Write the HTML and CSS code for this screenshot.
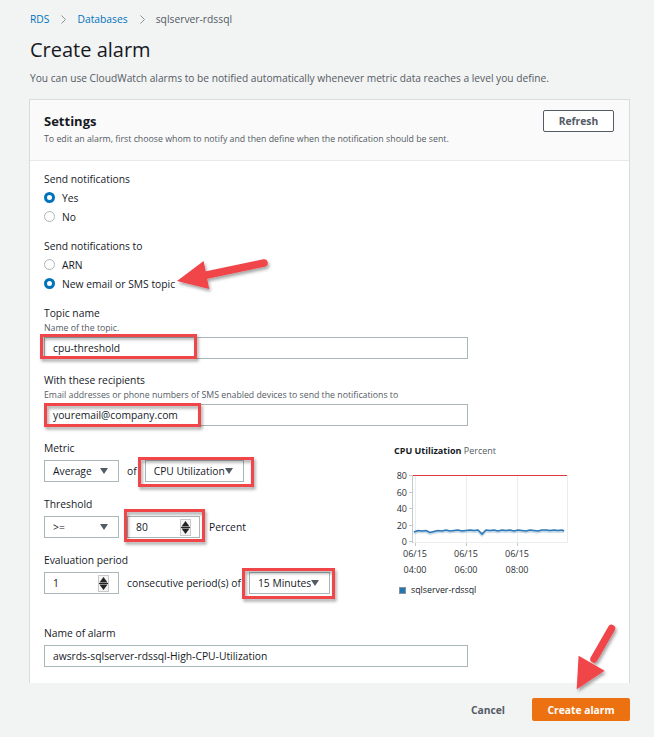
FILE: index.html
```html
<!DOCTYPE html>
<html lang="en">
<head>
<meta charset="utf-8">
<title>Create alarm</title>
<link rel="stylesheet" href="styles.css">
</head>
<body>
<div class="page">
  <nav class="crumbs">
    <a href="#">RDS</a>
    <svg class="sep" width="5" height="9" viewBox="0 0 5 9"><path d="M0.5 0.5 L4.5 4.5 L0.5 8.5" fill="none" stroke="#879596" stroke-width="1"/></svg>
    <a href="#">Databases</a>
    <svg class="sep" width="5" height="9" viewBox="0 0 5 9"><path d="M0.5 0.5 L4.5 4.5 L0.5 8.5" fill="none" stroke="#879596" stroke-width="1"/></svg>
    <span class="current">sqlserver-rdssql</span>
  </nav>
  <h1 class="title">Create alarm</h1>
  <p class="intro">You can use CloudWatch alarms to be notified automatically whenever metric data reaches a level you define.</p>

  <section class="panel">
    <header class="panel-head">
      <div>
        <h2 class="panel-title">Settings</h2>
        <p class="panel-sub">To edit an alarm, first choose whom to notify and then define when the notification should be sent.</p>
      </div>
      <button class="btn-outline" type="button">Refresh</button>
    </header>

    <div class="panel-body">
      <div class="field">
        <div class="label">Send notifications</div>
        <div class="radio checked"><span class="dot"></span>Yes</div>
        <div class="radio"><span class="dot"></span>No</div>
      </div>

      <div class="field">
        <div class="label">Send notifications to</div>
        <div class="radio"><span class="dot"></span>ARN</div>
        <div class="radio checked"><span class="dot"></span>New email or SMS topic</div>
      </div>

      <div class="field">
        <div class="label">Topic name</div>
        <div class="desc">Name of the topic.</div>
        <div class="input wide">cpu-threshold</div>
      </div>

      <div class="field field-text">
        <div class="label">With these recipients</div>
        <div class="desc">Email addresses or phone numbers of SMS enabled devices to send the notifications to</div>
        <div class="input wide">youremail@company.com</div>
      </div>

      <div class="metric-grid">
        <div class="metric-left">
          <div class="sub">
            <div class="label">Metric</div>
            <div class="row">
              <div class="select fixed"><span>Average</span><span class="caret"></span></div>
              <span>of</span>
              <div class="select auto"><span>CPU Utilization</span><span class="caret"></span></div>
            </div>
          </div>
          <div class="sub">
            <div class="label">Threshold</div>
            <div class="row">
              <div class="select fixed"><span>&gt;=</span><span class="caret"></span></div>
              <div class="number thr"><span>80</span>
                <svg class="spin" width="11" height="17" viewBox="0 0 11 17"><rect x="0.5" y="0.5" width="10" height="16" fill="#f4f4f4" stroke="#c9c9c9"/><path d="M1.5 7.5 L5.5 2 L9.5 7.5 Z" fill="#232323"/><line x1="1" y1="8.5" x2="10" y2="8.5" stroke="#232323" stroke-width="1"/><path d="M1.5 9.5 L9.5 9.5 L5.5 15 Z" fill="#232323"/></svg>
              </div>
              <span class="unit">Percent</span>
            </div>
          </div>
          <div class="sub">
            <div class="label">Evaluation period</div>
            <div class="row">
              <div class="number eval"><span>1</span>
                <svg class="spin" width="11" height="17" viewBox="0 0 11 17"><rect x="0.5" y="0.5" width="10" height="16" fill="#f4f4f4" stroke="#c9c9c9"/><path d="M1.5 7.5 L5.5 2 L9.5 7.5 Z" fill="#232323"/><line x1="1" y1="8.5" x2="10" y2="8.5" stroke="#232323" stroke-width="1"/><path d="M1.5 9.5 L9.5 9.5 L5.5 15 Z" fill="#232323"/></svg>
              </div>
              <span class="consec">consecutive period(s) of</span>
              <div class="select auto"><span>15 Minutes</span><span class="caret"></span></div>
            </div>
          </div>
        </div>

        <div class="chart">
          <div class="chart-title"><b>CPU Utilization</b> <span>Percent</span></div>
          <svg class="chart-svg" width="182" height="119" viewBox="0 0 182 119">
            <g stroke="#eaeded" stroke-width="1">
              <line x1="25.5" y1="18" x2="25.5" y2="85"/>
              <line x1="76.5" y1="18" x2="76.5" y2="85"/>
              <line x1="127.5" y1="18" x2="127.5" y2="85"/>
              <line x1="177.5" y1="18" x2="177.5" y2="85"/>
              <line x1="22" y1="85.5" x2="178" y2="85.5"/>
            </g>
            <g stroke="#c4c9cc" stroke-width="1">
              <line x1="22.5" y1="18" x2="22.5" y2="86"/>
              <line x1="19" y1="18.5" x2="22" y2="18.5"/>
              <line x1="19" y1="35.5" x2="22" y2="35.5"/>
              <line x1="19" y1="51.5" x2="22" y2="51.5"/>
              <line x1="19" y1="68.5" x2="22" y2="68.5"/>
              <line x1="19" y1="84.5" x2="22" y2="84.5"/>
              <line x1="25.5" y1="86" x2="25.5" y2="89"/>
              <line x1="76.5" y1="86" x2="76.5" y2="89"/>
              <line x1="127.5" y1="86" x2="127.5" y2="89"/>
            </g>
            <g class="ylab" text-anchor="end">
              <text x="17" y="21.5">80</text>
              <text x="17" y="38.5">60</text>
              <text x="17" y="54.5">40</text>
              <text x="17" y="71.5">20</text>
              <text x="17" y="87.5">0</text>
            </g>
            <line x1="23" y1="18.5" x2="177" y2="18.5" stroke="#e0393e" stroke-width="1.2"/>
            <polyline fill="none" stroke="#c8d9e6" stroke-width="3" points="24,76 28,74.5 32,75 36,74.5 40,76.5 44,75.5 48,74.5 52,75 56,74 60,75 64,74.5 68,74 72,75 76,74.5 80,74 84,74.5 88,74 92,78 96,74 100,74.5 104,74 108,75 112,74 116,74.5 120,74 124,75 128,74 132,74.5 136,75 140,74 144,74.5 148,75 152,74 156,74 160,74.5 164,74 168,74.5 172,74 174,75"/>
            <polyline fill="none" stroke="#2e78b7" stroke-width="1.6" points="24,75 28,73.5 32,74 36,73.5 40,75.5 44,74.5 48,73.5 52,74 56,73 60,74 64,73.5 68,73 72,74 76,73.5 80,73 84,73.5 88,73 92,77 96,73 100,73.5 104,73 108,74 112,73 116,73.5 120,73 124,74 128,73 132,73.5 136,74 140,73 144,73.5 148,74 152,73 156,73 160,73.5 164,73 168,73.5 172,73 174,74"/>
            <g class="xlab" text-anchor="middle">
              <text x="25" y="99.5">06/15</text>
              <text x="76" y="99.5">06/15</text>
              <text x="127" y="99.5">06/15</text>
              <text x="25" y="115.5">04:00</text>
              <text x="76" y="115.5">06:00</text>
              <text x="127" y="115.5">08:00</text>
            </g>
          </svg>
          <div class="legend"><span class="swatch"></span>sqlserver-rdssql</div>
        </div>
      </div>

      <div class="field name-field">
        <div class="label">Name of alarm</div>
        <div class="input wide">awsrds-sqlserver-rdssql-High-CPU-Utilization</div>
      </div>
    </div>
  </section>

  <footer class="actions">
    <button class="btn-link" type="button">Cancel</button>
    <button class="btn-primary" type="button">Create alarm</button>
  </footer>
</div>

<svg class="annotations" width="654" height="737" viewBox="0 0 654 737" aria-hidden="true">
  <defs>
    <filter id="shadow" x="-20%" y="-20%" width="140%" height="160%">
      <feDropShadow dx="1.5" dy="2.5" stdDeviation="1.6" flood-color="#000" flood-opacity="0.35"/>
    </filter>
  </defs>
  <g fill="none" stroke="#f0444a" stroke-width="3" filter="url(#shadow)">
    <rect x="41.5" y="335.5" width="154" height="22"/>
    <rect x="45.5" y="404.5" width="154" height="21"/>
    <rect x="139.5" y="458.5" width="113" height="27"/>
    <rect x="125.5" y="510.5" width="78" height="30"/>
    <rect x="243.5" y="569.5" width="90" height="28"/>
  </g>
  <g fill="#f0444a" filter="url(#shadow)">
    <line x1="264" y1="263" x2="202" y2="276" stroke="#f0444a" stroke-width="7.5" stroke-linecap="round"/>
    <polygon points="177,281 203.6,261 209.2,289"/>
    <line x1="611.5" y1="628.5" x2="594" y2="659" stroke="#f0444a" stroke-width="7.5" stroke-linecap="round"/>
    <polygon points="576.7,689.3 578.6,655.8 604.6,670.8"/>
  </g>
</svg>
</body>
</html>
```

FILE: styles.css
```css
* { box-sizing: border-box; }

html, body { margin: 0; padding: 0; }

body {
  position: relative;
  width: 654px;
  min-height: 737px;
  overflow: hidden;
  background: #f2f3f3;
  color: #16191f;
  font-family: "Open Sans", "Noto Sans", sans-serif;
  font-size: 10.3px;
}

.page {
  width: 601px;
  margin-left: 29px;
  padding-top: 11px;
}

/* breadcrumb */
.crumbs {
  display: flex;
  align-items: center;
  height: 16px;
  line-height: 16px;
  padding-left: 1px;
}
.crumbs a { color: #0073bb; text-decoration: none; }
.crumbs .sep { margin: 0 11px 0 12px; }
.crumbs .current { color: #545b64; }

.title {
  margin: 10px 0 0;
  padding-left: 1px;
  font-size: 20px;
  font-weight: 400;
  line-height: 26px;
}

.intro {
  margin: 7px 0 0;
  padding-left: 1px;
  font-size: 10.2px;
  line-height: 16px;
  color: #545b64;
}

/* panel */
.panel {
  margin-top: 13px;
  background: #fff;
  border: 1px solid #d9dcdc;
  border-bottom: none;
}

.panel-head {
  display: flex;
  justify-content: space-between;
  align-items: flex-start;
  padding: 12px 15px 15px 14px;
  background: #fafafa;
  border-bottom: 1px solid #e6e9e9;
}

.panel-title {
  margin: 0;
  font-size: 13px;
  font-weight: 700;
  line-height: 18px;
}

.panel-sub {
  margin: 3px 0 0;
  font-size: 8.8px;
  line-height: 12px;
  color: #545b64;
}

.btn-outline {
  margin-top: -2px;
  width: 71px;
  height: 22px;
  padding: 0;
  background: #fff;
  border: 1px solid #545b64;
  border-radius: 2px;
  color: #545b64;
  font-family: inherit;
  font-size: 10.3px;
  font-weight: 700;
}

.panel-body {
  padding: 10px 14px 16px 14px;
}

.label {
  line-height: 17px;
}

.field + .field { margin-top: 12px; }
.field-text { margin-top: 13px !important; }

.radio {
  display: flex;
  align-items: center;
  gap: 7px;
  height: 19px;
}
.radio .dot {
  width: 11px;
  height: 11px;
  border-radius: 50%;
  border: 1px solid #aab7b8;
  background: #fff;
}
.radio.checked .dot {
  border: 3.5px solid #0073bb;
}

.desc {
  font-size: 8.75px;
  line-height: 12px;
  color: #545b64;
}

.input {
  display: flex;
  align-items: center;
  height: 22px;
  margin-top: 3px;
  padding: 0 8px;
  border: 1px solid #aab7b8;
  background: #fff;
}
.input.wide { width: 424px; }

/* metric section */
.metric-grid {
  display: grid;
  grid-template-columns: 350px 1fr;
  margin-top: 14px;
}

.metric-left .sub + .sub { margin-top: 14px; }

.row {
  display: flex;
  align-items: center;
  gap: 8px;
  margin-top: 3px;
}

.select, .number {
  display: flex;
  align-items: center;
  height: 22px;
  border: 1px solid #aab7b8;
  background: #fff;
}

.select.fixed {
  width: 75px;
  justify-content: space-between;
  padding: 0 10px 0 8px;
}
.select.auto {
  padding: 0 10px 0 8px;
}

.caret {
  width: 0;
  height: 0;
  border-left: 4px solid transparent;
  border-right: 4px solid transparent;
  border-top: 6px solid #545b64;
}

.number {
  justify-content: space-between;
  padding: 0 8px 0 8px;
}
.number.thr { width: 73px; }
.number.eval { width: 75px; padding-right: 9px; }

.unit { margin-left: 1px; }

/* chart */
.chart {
  padding-top: 5px;
}
.chart-title {
  font-size: 9px;
  line-height: 12px;
}
.chart-title b { font-weight: 700; }
.chart-title span { color: #545b64; }

.chart-svg {
  display: block;
  margin-left: -4px;
}
.chart-svg text {
  font-family: "Open Sans", "Noto Sans", sans-serif;
  font-size: 9px;
  fill: #2b3035;
}

.legend {
  display: flex;
  align-items: center;
  gap: 5px;
  margin-top: 8px;
  margin-left: 5px;
  font-size: 8.8px;
  line-height: 12px;
}
.swatch {
  width: 7px;
  height: 7px;
  background: #1f77b4;
  border: 1px solid #8a9096;
}

.name-field { margin-top: 29px !important; }

/* footer */
.actions {
  display: flex;
  justify-content: flex-end;
  align-items: center;
  gap: 27px;
  padding-top: 15px;
}
.btn-link {
  padding: 0;
  background: none;
  border: none;
  color: #545b64;
  font-family: inherit;
  font-size: 10.3px;
  font-weight: 700;
}
.btn-primary {
  width: 98px;
  height: 23px;
  padding: 0;
  background: #ec7211;
  border: none;
  border-radius: 2px;
  color: #fff;
  font-family: inherit;
  font-size: 10.3px;
  font-weight: 700;
}

/* annotation overlay (arrows and highlight boxes drawn over the screenshot) */
.annotations {
  position: absolute;
  top: 0;
  left: 0;
  pointer-events: none;
}
```
